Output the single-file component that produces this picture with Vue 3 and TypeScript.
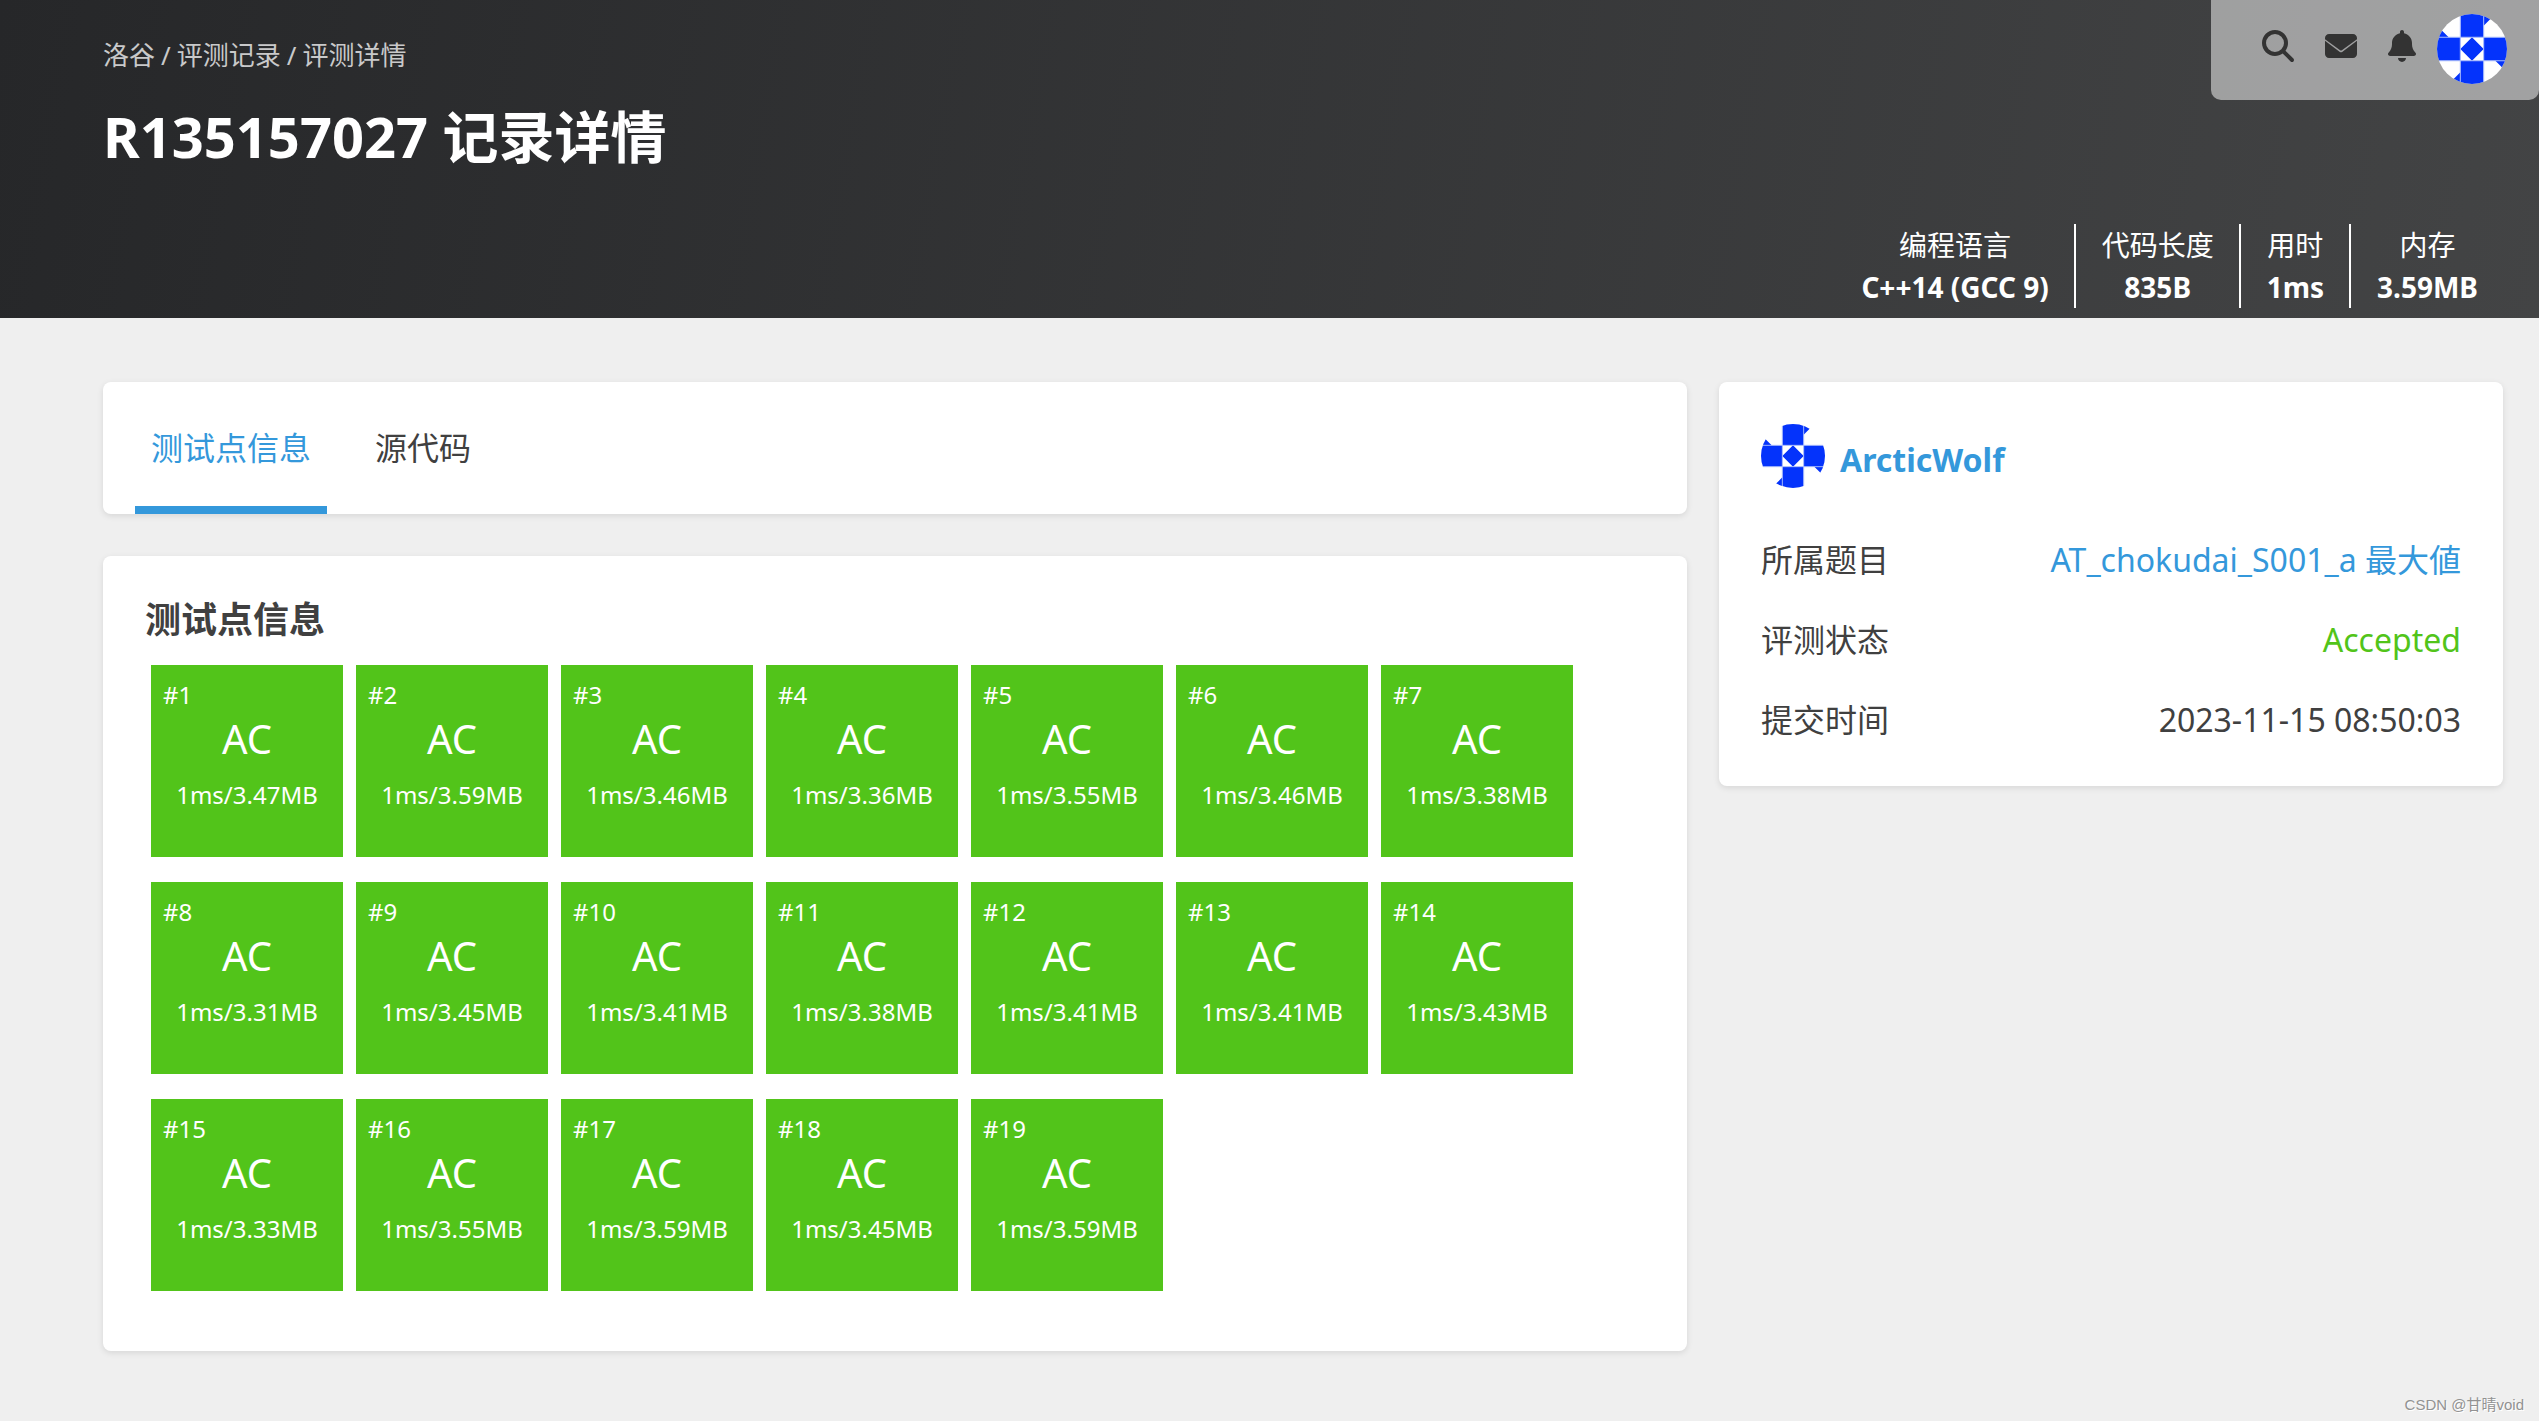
<script setup lang="ts">
import { ref } from 'vue'

interface Stat {
  label: string
  value: string
}

const stats: Stat[] = [
  { label: '编程语言', value: 'C++14 (GCC 9)' },
  { label: '代码长度', value: '835B' },
  { label: '用时', value: '1ms' },
  { label: '内存', value: '3.59MB' },
]

const tabs: string[] = ['测试点信息', '源代码']
const activeTab = ref(0)

const memory: string[] = [
  '3.47', '3.59', '3.46', '3.36', '3.55', '3.46', '3.38',
  '3.31', '3.45', '3.41', '3.38', '3.41', '3.41', '3.43',
  '3.33', '3.55', '3.59', '3.45', '3.59',
]
</script>

<template>
  <div class="page">
    <!-- Identicon shared by the toolbar and the author card -->
    <svg class="defs" aria-hidden="true">
      <symbol id="identicon" viewBox="0 0 60 60">
        <clipPath id="identicon-clip"><circle cx="30" cy="30" r="30" /></clipPath>
        <g clip-path="url(#identicon-clip)">
          <rect width="60" height="60" fill="#fff" />
          <path
            fill="#0433fb"
            d="M20 0h20v20H20zM0 20h20v20H0zM40 20h20v20H40zM20 40h20v20H20zM30 20l10 10-10 10-10-10zM0 10l10 10H0zM40 0h10L40 10zM50 40h10v10zM20 50v10H10z"
          />
          <path stroke="#a9bcfb" stroke-width="0.9" d="M20 0v60M40 0v60M0 20h60M0 40h60" />
        </g>
      </symbol>
    </svg>

    <header class="header">
      <div class="toolbar">
        <button class="icon-button" type="button" aria-label="搜索">
          <svg width="32" height="32" viewBox="0 0 512 512">
            <path
              d="M416 208c0 45.9-14.9 88.3-40 122.7L502.6 457.4c12.5 12.5 12.5 32.8 0 45.3s-32.8 12.5-45.3 0L330.7 376c-34.4 25.2-76.8 40-122.7 40C93.1 416 0 322.9 0 208S93.1 0 208 0S416 93.1 416 208zM208 352a144 144 0 1 0 0-288 144 144 0 1 0 0 288z"
            />
          </svg>
        </button>
        <a class="icon-button" href="#" aria-label="私信">
          <svg width="32" height="32" viewBox="0 0 512 512">
            <path
              d="M64 64h384c35 0 64 29 64 64v18L270 322q-14 9-28 0L0 146v-18c0-35 29-64 64-64zM0 172l238 178q18 12 36 0l238-178v212c0 35-29 64-64 64H64c-35 0-64-29-64-64z"
            />
          </svg>
        </a>
        <a class="icon-button" href="#" aria-label="通知">
          <svg width="28" height="32" viewBox="0 0 448 512">
            <path
              d="M224 0c-17.700 0-32 14.300-32 32V51.200C119 66 64 130.600 64 208v18.800c0 47-17.300 92.400-48.500 127.600l-7.400 8.300c-8.400 9.400-10.400 22.900-5.300 34.400S19.400 416 32 416H416c12.600 0 24-7.400 29.200-18.900s3.100-25-5.300-34.400l-7.400-8.300C401.300 319.200 384 273.900 384 226.800V208c0-77.400-55-142-128-156.800V32c0-17.700-14.300-32-32-32zm45.300 493.300c12-12 18.700-28.300 18.700-45.300H160c0 17 6.700 33.300 18.700 45.300s28.300 18.700 45.300 18.700s33.300-6.700 45.300-18.700z"
            />
          </svg>
        </a>
        <a class="user-link" href="#" aria-label="ArcticWolf">
          <svg width="70" height="70"><use href="#identicon" /></svg>
        </a>
      </div>

      <nav class="breadcrumb" aria-label="位置">
        <a href="#">洛谷</a><span>/</span><a href="#">评测记录</a><span>/</span><a href="#">评测详情</a>
      </nav>
      <h1 class="title">R135157027 记录详情</h1>

      <dl class="stats">
        <div v-for="stat in stats" :key="stat.label" class="stat">
          <dt>{{ stat.label }}</dt>
          <dd>{{ stat.value }}</dd>
        </div>
      </dl>
    </header>

    <main class="content">
      <div class="primary">
        <nav class="card tabs">
          <button
            v-for="(tab, index) in tabs"
            :key="tab"
            type="button"
            class="tab"
            :class="{ active: index === activeTab }"
            @click="activeTab = index"
          >
            {{ tab }}
          </button>
        </nav>

        <section class="card cases">
          <h2 class="cases-title">测试点信息</h2>
          <div class="case-grid">
            <div v-for="(mb, index) in memory" :key="index" class="case">
              <span class="case-id">#{{ index + 1 }}</span>
              <span class="case-status">AC</span>
              <span class="case-usage">1ms/{{ mb }}MB</span>
            </div>
          </div>
        </section>
      </div>

      <aside class="card side">
        <div class="author">
          <svg width="64" height="64"><use href="#identicon" /></svg>
          <a class="author-name" href="#">ArcticWolf</a>
        </div>
        <dl class="info">
          <div class="info-row">
            <dt>所属题目</dt>
            <dd><a href="#">AT_chokudai_S001_a 最大値</a></dd>
          </div>
          <div class="info-row">
            <dt>评测状态</dt>
            <dd class="accepted">Accepted</dd>
          </div>
          <div class="info-row">
            <dt>提交时间</dt>
            <dd>2023-11-15 08:50:03</dd>
          </div>
        </dl>
      </aside>
    </main>

    <div class="watermark">CSDN @甘晴void</div>
  </div>
</template>

<style>
body {
  margin: 0;
  background: #efefef;
}
</style>

<style scoped>
.page {
  position: relative;
  box-sizing: border-box;
  min-height: 100vh;
  background: #efefef;
  color: #404040;
  font-family: 'Noto Sans', 'Noto Sans CJK SC', sans-serif;
  font-size: 32px;
  line-height: 48px;
}

.defs {
  position: absolute;
  width: 0;
  height: 0;
}

a {
  color: #3498db;
  text-decoration: none;
}

dl,
dd,
h1,
h2 {
  margin: 0;
}

button {
  padding: 0;
  border: 0;
  background: none;
  color: inherit;
  font: inherit;
  cursor: pointer;
}

.header {
  position: relative;
  padding: 36px 36px 10px 103px;
  background: linear-gradient(100deg, #262729, #434445);
  color: #fff;
}

.toolbar {
  position: absolute;
  top: 0;
  right: 0;
  display: flex;
  align-items: flex-start;
  box-sizing: border-box;
  height: 100px;
  padding: 14px 32px 0 51px;
  border-radius: 0 0 10px 10px;
  background: rgba(255, 255, 255, 0.5);
}

.icon-button {
  display: block;
  height: 32px;
  margin: 16px 31px 0 0;
  line-height: 0;
}

.icon-button:nth-child(3) {
  margin-right: 21px;
}

.icon-button svg {
  display: block;
  fill: #333;
}

.user-link svg {
  display: block;
}

.breadcrumb {
  display: flex;
  gap: 6px;
  color: #c9c9ca;
  font-size: 26px;
  line-height: 38px;
}

.breadcrumb a {
  color: inherit;
}

.title {
  margin-top: 20px;
  font-size: 56px;
  font-weight: 700;
  line-height: 84px;
}

.stats {
  display: flex;
  justify-content: flex-end;
  margin-top: 46px;
  font-size: 28px;
  line-height: 42px;
  text-align: center;
}

.stat {
  padding: 0 25px 0 26px;
}

.stat + .stat {
  border-left: 2px solid #fff;
}

.stat dd {
  font-weight: 700;
}

.content {
  display: flex;
  align-items: flex-start;
  gap: 32px;
  padding: 64px 36px 71px 103px;
}

.primary {
  display: flex;
  flex: 1;
  flex-direction: column;
  gap: 42px;
  min-width: 0;
}

.card {
  border-radius: 8px;
  background: #fff;
  box-shadow: 0 2px 6px rgba(0, 0, 0, 0.1);
}

.tabs {
  display: flex;
  gap: 32px;
  padding: 0 32px;
}

.tab {
  padding: 42px 16px 34px;
  border-bottom: 8px solid transparent;
}

.tab.active {
  border-color: #3498db;
  color: #3498db;
}

.cases {
  padding: 42px 42px 60px;
}

.cases-title {
  font-size: 36px;
  font-weight: 700;
  line-height: 44px;
}

.case-grid {
  display: flex;
  flex-wrap: wrap;
  gap: 25px 13px;
  margin: 23px 0 0 6px;
}

.case {
  display: flex;
  flex-direction: column;
  box-sizing: border-box;
  width: 192px;
  height: 192px;
  padding: 12px;
  background: #52c41a;
  color: #fff;
  font-size: 24px;
  line-height: 36px;
  text-align: center;
}

.case-id {
  text-align: left;
}

.case-status {
  font-size: 40px;
  line-height: 52px;
}

.case-usage {
  margin-top: 12px;
}

.side {
  flex: 0 0 calc(100% / 3 - 16px);
  box-sizing: border-box;
  padding: 42px 42px 26px;
}

.author {
  display: flex;
  align-items: center;
  gap: 15px;
  margin-bottom: 32px;
}

.author-name {
  padding-top: 8px;
  font-weight: 700;
}

.info-row {
  display: flex;
  justify-content: space-between;
  line-height: 80px;
}

.accepted {
  color: #52c41a;
}

.watermark {
  position: absolute;
  right: 15px;
  bottom: 5px;
  color: #929292;
  font-family: 'Liberation Sans', 'Noto Sans CJK SC', sans-serif;
  font-size: 15px;
  line-height: 24px;
  text-shadow: 1px 1px 0 #fff;
}
</style>
